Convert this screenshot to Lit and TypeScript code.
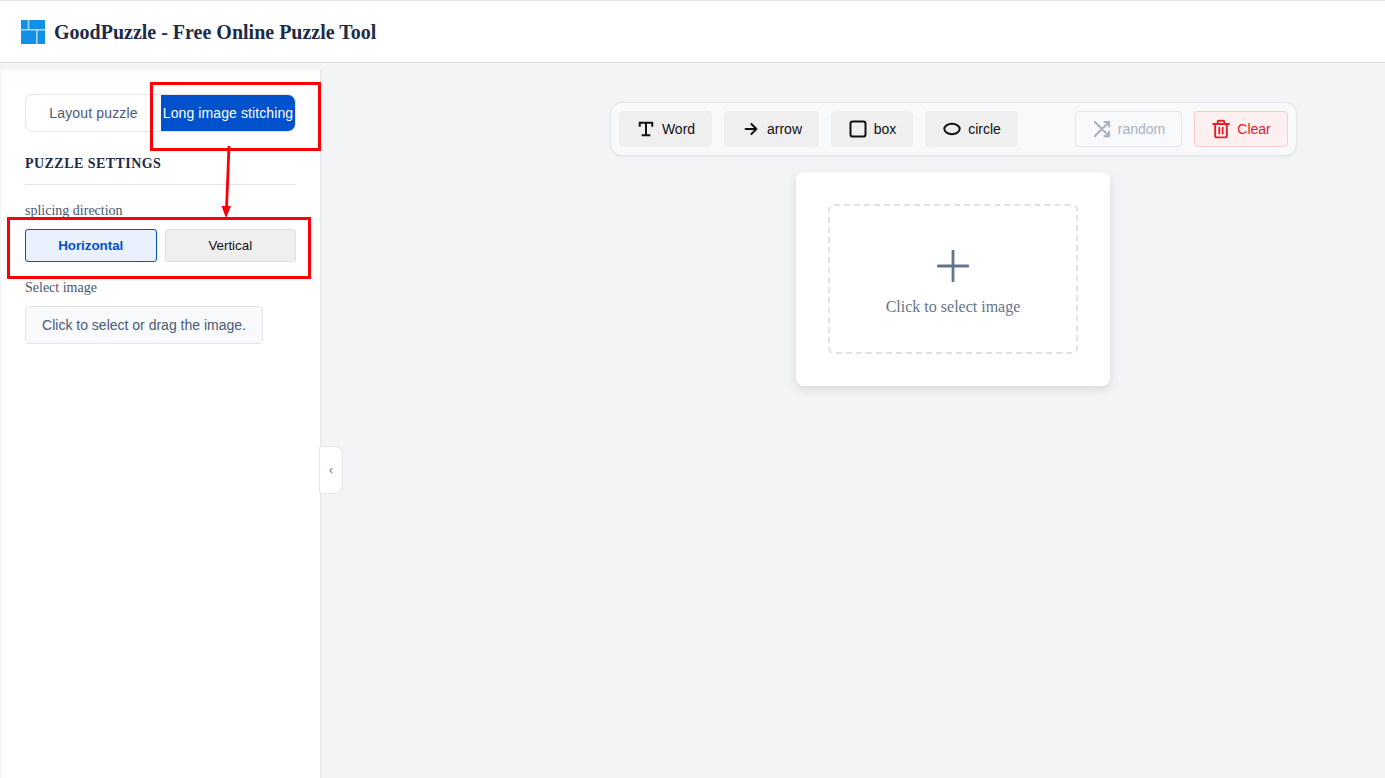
import { LitElement, html, css, svg } from "lit";
import { customElement } from "lit/decorators.js";

@customElement("app-root")
export class AppRoot extends LitElement {
  static styles = css`
    :host { display: block; height: 778px; overflow: hidden; position: relative; background: #f3f4f6; font-family: "Liberation Serif", serif; box-sizing: border-box; }
    * { box-sizing: border-box; }
    .top { height: 1px; background: #e8e4e6; }
    header { height: 62px; background: #fff; border-bottom: 1px solid #d9dde5; display: flex; align-items: center; gap: 9px; padding-left: 21px; }
    header svg { display: block; }
    h1 { margin: 2px 0 0; font-size: 20px; font-weight: 700; color: #1e2a4a; white-space: nowrap; }
    .body { display: flex; height: 715px; }
    aside { width: 321px; margin: 7px 0 0 0; border-left: 1px solid #f3f4f6; background: #fff; border-right: 1px solid #e2e5ea; padding: 24px 24px 0 24px; }
    .tabs { display: flex; height: 38px; width: 271px; border: 1px solid #e2e5ea; border-radius: 8px; }
    .tab { flex: 1; display: flex; align-items: center; justify-content: center; font: 14px "Liberation Sans", sans-serif; letter-spacing: 0.15px; color: #4a5a78; white-space: nowrap; }
    .tab.on { flex: none; width: 134px; background: #0052cc; color: #fff; border-radius: 0 7px 7px 0; letter-spacing: 0.1px; }
    h2 { margin: 24px 0 0; font-size: 14px; font-weight: 700; letter-spacing: 0.45px; color: #1e2a4a; line-height: 16px; padding-bottom: 12px; border-bottom: 1px solid #e2e5ea; width: 271px; }
    .label { font-size: 14px; line-height: 16px; color: #4a5568; margin-top: 18px; }
    .dirs { display: flex; gap: 8px; width: 271px; margin-top: 10px; }
    .dir { flex: 1; height: 33px; display: flex; align-items: center; justify-content: center; font: 13.3333px "Liberation Sans", sans-serif; border-radius: 3px; border: 1px solid #e0e0e0; background: #efefef; color: #111; }
    .dir.on { background: #e8f1fd; border-color: #0052cc; color: #0052cc; font-weight: 700; }
    .sel-label { margin-top: 18px; }
    .pick { margin-top: 10px; width: 238px; height: 38px; display: flex; align-items: center; justify-content: center; background: #f8f9fb; border: 1px solid #e2e5ea; border-radius: 4px; font: 14px "Liberation Sans", sans-serif; color: #4a5a78; white-space: nowrap; }
    main { flex: 1; display: flex; flex-direction: column; align-items: center; padding: 39px 0 0 200px; }
    .toolbar { width: 687px; height: 54px; margin-left: 1px; background: #f8f9fb; border: 1px solid #e2e5ea; border-radius: 12px; box-shadow: 0 1px 3px rgba(0,0,0,.05); display: flex; align-items: center; padding: 0 8px; gap: 12px; }
    .tool { height: 36px; display: flex; align-items: center; justify-content: center; gap: 6px; background: #efefef; border-radius: 4px; font: 14px "Liberation Sans", sans-serif; color: #111; }
    .tool svg { display: block; flex: none; }
    .spacer { flex: 1; }
    .random { background: transparent; border: 1px solid #e2e5ea; color: #a9b3c4; }
    .clear { background: #fef0f0; border: 1px solid #fdc8c8; color: #e0202a; }
    .card { margin-top: 16px; width: 314px; height: 214px; background: #fff; border-radius: 8px; box-shadow: 0 4px 8px rgba(80,90,120,.16); padding: 32px; }
    .drop { width: 250px; height: 150px; border: 2px dashed #dfe1e8; border-radius: 6px; display: flex; flex-direction: column; align-items: center; padding-top: 44px; }
    .drop svg { display: block; }
    .drop span { margin-top: 16px; font-size: 16px; line-height: 18px; color: #64748b; white-space: nowrap; }
    .collapse { position: absolute; left: 319px; top: 446px; width: 24px; height: 48px; background: #fff; border: 1px solid #e2e5ea; border-radius: 2px 8px 8px 2px; display: flex; align-items: center; justify-content: center; font: 12px "Liberation Sans", sans-serif; color: #64748b; }
    .mark { position: absolute; border: 3px solid #fb0007; pointer-events: none; }
    .m1 { left: 150px; top: 82px; width: 171px; height: 69px; }
    .m2 { left: 7px; top: 217px; width: 304px; height: 62px; }
    .arrow { position: absolute; left: 215px; top: 145px; display: block; }
  `;

  private logo() {
    return html`<svg width="24" height="24" viewBox="0 0 24 24"><rect width="24" height="24" fill="#1190e8"/><path d="M7.5 0V9.5M0 9.8H24M15.8 9.8V24" stroke="#a9d6f5" stroke-width="1.6" fill="none"/></svg>`;
  }

  private icon(name: string, color: string, size = 20) {
    const paths: Record<string, unknown> = {
      word: svg`<path d="M4.5 8V4.5H19.5V8M12 4.5V19.5M8 19.5H16" stroke-width="2.4" stroke-linecap="square" stroke-linejoin="miter"/>`,
      arrow: svg`<path d="M5.5 12H18.5M12.5 6L18.5 12L12.5 18" stroke-width="2.3"/>`,
      box: svg`<rect x="3" y="3" width="18" height="18" rx="2.5" stroke-width="2.4"/>`,
      circle: svg`<ellipse cx="12" cy="12" rx="9.2" ry="6.2" stroke-width="2.4"/>`,
      random: svg`<path d="M15 3.5H20.5V9M3.5 20.5L20.5 3.5M20.5 15V20.5H15M3.5 3.5L20.5 20.5" stroke-width="2.5"/>`,
      clear: svg`<path d="M2.5 6H21.5M8 6V3.5C8 2.7 8.7 2 9.5 2H14.5C15.3 2 16 2.7 16 3.5V6M19 6V20C19 21.1 18.1 22 17 22H7C5.9 22 5 21.1 5 20V6M10 10.5V17.5M14 10.5V17.5" stroke-width="2.3"/>`,
    };
    return html`<svg width="${size}" height="${size}" viewBox="0 0 24 24" fill="none" stroke="${color}" stroke-linecap="round" stroke-linejoin="round">${paths[name]}</svg>`;
  }

  render() {
    return html`
      <div class="top"></div>
      <header>${this.logo()}<h1>GoodPuzzle - Free Online Puzzle Tool</h1></header>
      <div class="body">
        <aside>
          <div class="tabs"><div class="tab">Layout puzzle</div><div class="tab on">Long image stitching</div></div>
          <h2>PUZZLE SETTINGS</h2>
          <div class="label">splicing direction</div>
          <div class="dirs"><div class="dir on">Horizontal</div><div class="dir">Vertical</div></div>
          <div class="label sel-label">Select image</div>
          <div class="pick">Click to select or drag the image.</div>
        </aside>
        <main>
          <div class="toolbar">
            <div class="tool" style="width:93px">${this.icon("word", "#111")}Word</div>
            <div class="tool" style="width:95px">${this.icon("arrow", "#111")}arrow</div>
            <div class="tool" style="width:82px">${this.icon("box", "#111")}box</div>
            <div class="tool" style="width:93px">${this.icon("circle", "#111")}circle</div>
            <div class="spacer"></div>
            <div class="tool random" style="width:107px">${this.icon("random", "#a9b3c4")}random</div>
            <div class="tool clear" style="width:94px">${this.icon("clear", "#e0202a")}Clear</div>
          </div>
          <div class="card">
            <div class="drop">
              <svg width="32" height="32" viewBox="0 0 32 32"><path d="M16 1V31M1 16H31" stroke="#64748b" stroke-width="2.8" stroke-linecap="round" fill="none"/></svg>
              <span>Click to select image</span>
            </div>
          </div>
        </main>
      </div>
      <div class="collapse">‹</div>
      <div class="mark m1"></div>
      <div class="mark m2"></div>
      <svg class="arrow" width="24" height="74" viewBox="0 0 24 74"><path d="M14 1L11.5 64" stroke="#fb0007" stroke-width="2.8" fill="none"/><path d="M6.5 61H16L11 73Z" fill="#fb0007"/></svg>
    `;
  }
}
